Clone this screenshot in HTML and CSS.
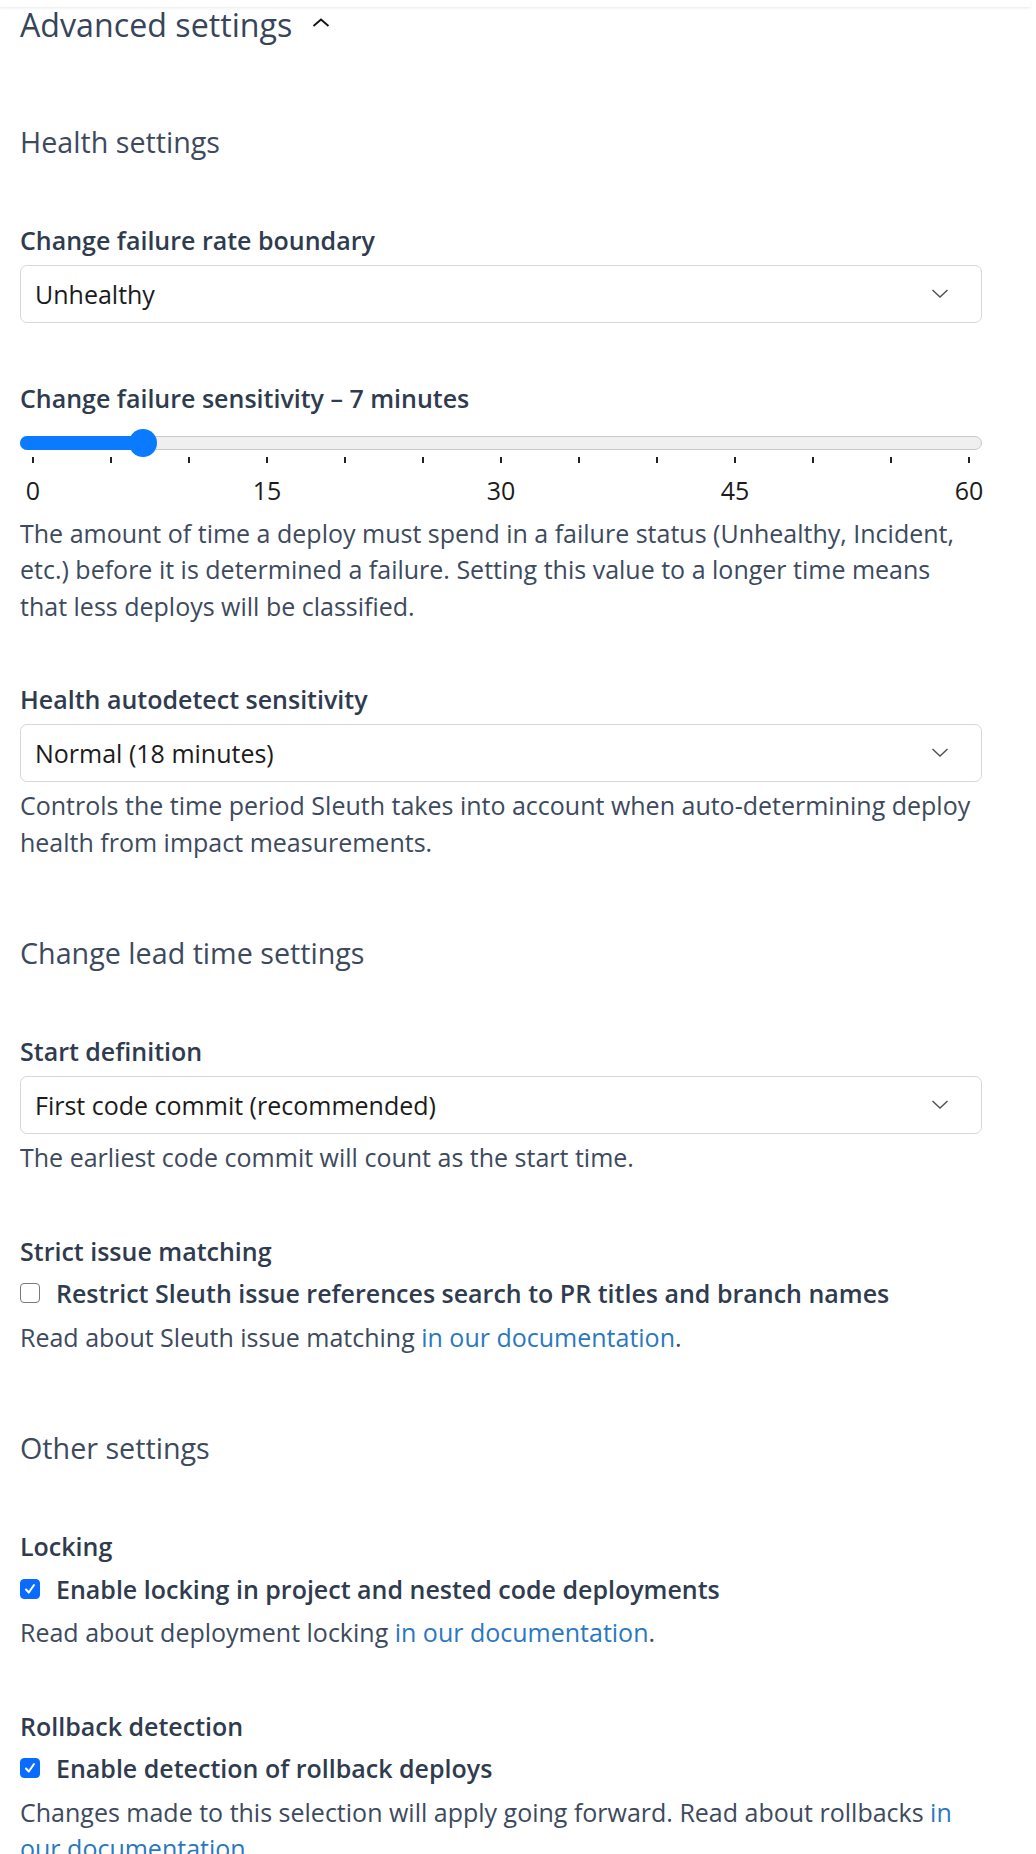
FILE: index.html
```html
<!DOCTYPE html>
<html lang="en">
<head>
<meta charset="utf-8">
<title>Advanced settings</title>
<link rel="stylesheet" href="styles.css">
</head>
<body>
<div class="topbar"></div>
<main class="page">
  <h2 class="adv-title">Advanced settings
    <svg class="adv-chevron" width="18" height="9" viewBox="0 0 18 9"><path d="M1.5 8 L9 1.5 L16.5 8" fill="none" stroke="#111" stroke-width="1.8"/></svg>
  </h2>

  <h3 class="group-title first">Health settings</h3>

  <div class="field">
    <div class="label">Change failure rate boundary</div>
    <div class="select"><span>Unhealthy</span>
      <svg class="sel-chevron" width="18" height="9" viewBox="0 0 18 9"><path d="M1.5 1 L9 8 L16.5 1" fill="none" stroke="#555" stroke-width="1.5"/></svg>
    </div>
  </div>

  <div class="field">
    <div class="label">Change failure sensitivity – 7 minutes</div>
    <div class="slider">
      <div class="track"></div>
      <div class="fill" style="width: 123px"></div>
      <div class="thumb" style="left: 109px"></div>
    </div>
    <div class="ticks">
      <i></i><i></i><i></i><i></i><i></i><i></i><i></i><i></i><i></i><i></i><i></i><i></i><i></i>
    </div>
    <div class="scale">
      <span style="left: 0%">0</span>
      <span style="left: 25%">15</span>
      <span style="left: 50%">30</span>
      <span style="left: 75%">45</span>
      <span style="left: 100%">60</span>
    </div>
    <p class="help">The amount of time a deploy must spend in a failure status (Unhealthy, Incident, etc.) before it is determined a failure. Setting this value to a longer time means that less deploys will be classified.</p>
  </div>

  <div class="field">
    <div class="label">Health autodetect sensitivity</div>
    <div class="select"><span>Normal (18 minutes)</span>
      <svg class="sel-chevron" width="18" height="9" viewBox="0 0 18 9"><path d="M1.5 1 L9 8 L16.5 1" fill="none" stroke="#555" stroke-width="1.5"/></svg>
    </div>
    <p class="help">Controls the time period Sleuth takes into account when auto-determining deploy health from impact measurements.</p>
  </div>

  <h3 class="group-title">Change lead time settings</h3>

  <div class="field">
    <div class="label">Start definition</div>
    <div class="select"><span>First code commit (recommended)</span>
      <svg class="sel-chevron" width="18" height="9" viewBox="0 0 18 9"><path d="M1.5 1 L9 8 L16.5 1" fill="none" stroke="#555" stroke-width="1.5"/></svg>
    </div>
    <p class="help">The earliest code commit will count as the start time.</p>
  </div>

  <div class="field">
    <div class="label">Strict issue matching</div>
    <label class="check-row"><span class="box"></span><span>Restrict Sleuth issue references search to PR titles and branch names</span></label>
    <p class="help">Read about Sleuth issue matching <a href="#">in our documentation</a>.</p>
  </div>

  <h3 class="group-title">Other settings</h3>

  <div class="field">
    <div class="label">Locking</div>
    <label class="check-row"><span class="box checked"><svg width="14" height="14" viewBox="0 0 14 14"><path d="M3 7.5 L5.8 10.5 L11 3" fill="none" stroke="#fff" stroke-width="2" stroke-linecap="round" stroke-linejoin="round"/></svg></span><span>Enable locking in project and nested code deployments</span></label>
    <p class="help">Read about deployment locking <a href="#">in our documentation</a>.</p>
  </div>

  <div class="field">
    <div class="label">Rollback detection</div>
    <label class="check-row"><span class="box checked"><svg width="14" height="14" viewBox="0 0 14 14"><path d="M3 7.5 L5.8 10.5 L11 3" fill="none" stroke="#fff" stroke-width="2" stroke-linecap="round" stroke-linejoin="round"/></svg></span><span>Enable detection of rollback deploys</span></label>
    <p class="help">Changes made to this selection will apply going forward. Read about rollbacks <a href="#">in our documentation</a>.</p>
  </div>
</main>
</body>
</html>
```

FILE: styles.css
```css
* { box-sizing: border-box; }
html, body { margin: 0; padding: 0; background: #fff; }
body {
  font-family: "Open Sans", "Noto Sans", sans-serif;
  color: #3d4a5d;
  font-size: 25px;
}
.topbar {
  height: 7px;
  width: 1030px;
  background: #fff;
  box-shadow: 0 1px 3px rgba(0, 0, 0, 0.09);
  position: relative;
  z-index: 1;
}
.page {
  width: 982px;
  padding-left: 20px;
  padding-bottom: 40px;
}
.adv-title {
  margin: 0;
  font-size: 32.2px;
  font-weight: 400;
  line-height: 36px;
  color: #37455a;
  display: flex;
  align-items: center;
  gap: 20px;
}
.adv-chevron { margin-top: -6px; }
.group-title {
  margin: 76px 0 0;
  font-size: 28.7px;
  font-weight: 400;
  line-height: 34px;
  color: #3d4a5d;
}
.group-title.first { margin-top: 82px; }
.field { margin-top: 60px; }
.group-title + .field { margin-top: 66px; }
.label {
  font-weight: 600;
  font-size: 25px;
  line-height: 30px;
  color: #2f3b4e;
}
.select {
  margin-top: 10px;
  width: 962px;
  height: 57.5px;
  border: 1px solid #d5d8de;
  border-radius: 7px;
  display: flex;
  align-items: center;
  justify-content: space-between;
  padding: 0 32px 0 14px;
  color: #1b1b1b;
  font-size: 25px;
}
.slider {
  position: relative;
  width: 962px;
  height: 28px;
  margin-top: 16px;
}
.track {
  position: absolute;
  left: 0; right: 0; top: 7px;
  height: 14px;
  border-radius: 7px;
  background: #efefef;
  border: 1px solid #c9c9c9;
}
.fill {
  position: absolute;
  left: 0; top: 7px;
  height: 14px;
  border-radius: 7px 0 0 7px;
  background: #0a7aff;
}
.thumb {
  position: absolute;
  top: 0;
  width: 28px; height: 28px;
  border-radius: 50%;
  background: #0a7aff;
}
.ticks {
  display: flex;
  justify-content: space-between;
  width: 938px;
  margin-left: 12px;
  height: 6px;
}
.ticks i {
  display: block;
  width: 2px;
  height: 6px;
  background: #222;
}
.scale {
  position: relative;
  width: 936px;
  margin: 12px 0 0 13px;
  height: 30px;
  line-height: 30px;
  color: #1b1b1b;
}
.scale span {
  position: absolute;
  top: 0;
  transform: translateX(-50%);
}
.help {
  margin: 10px 0 0;
  line-height: 36.5px;
  color: #3d4a5d;
}
.select + .help { margin-top: 5.6px; }
.check-row {
  display: flex;
  align-items: center;
  gap: 16px;
  margin-top: 12.6px;
  font-weight: 600;
  line-height: 30px;
  color: #2f3b4e;
}
.box {
  width: 20px; height: 20px;
  border: 1.5px solid #7a7a7a;
  border-radius: 4px;
  display: flex;
  align-items: center;
  justify-content: center;
  flex: none;
  background: #fff;
}
.box.checked {
  background: #0a6cff;
  border-color: #0a6cff;
}
.check-row + .help { margin-top: 10.5px; }
a { color: #2a78c0; text-decoration: none; }
```
